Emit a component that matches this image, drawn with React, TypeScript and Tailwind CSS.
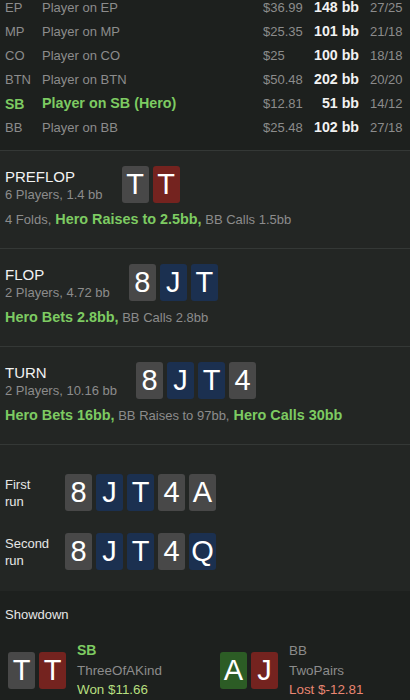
// ─── Data ─────────────────────────────────────────────────────────────────────

type Suit = "s" | "h" | "d" | "c";

const SUIT_BG: Record<Suit, string> = {
  s: "bg-[#484848]",
  h: "bg-[#74231f]",
  d: "bg-[#1b3050]",
  c: "bg-[#2c5c25]",
};

const PLAYERS = [
  { pos: "EP", name: "Player on EP", money: "$36.99", bb: "148 bb", count: "27/25" },
  { pos: "MP", name: "Player on MP", money: "$25.35", bb: "101 bb", count: "21/18" },
  { pos: "CO", name: "Player on CO", money: "$25", bb: "100 bb", count: "18/18" },
  { pos: "BTN", name: "Player on BTN", money: "$50.48", bb: "202 bb", count: "20/20" },
  { pos: "SB", name: "Player on SB (Hero)", money: "$12.81", bb: "51 bb", count: "14/12", hero: true },
  { pos: "BB", name: "Player on BB", money: "$25.48", bb: "102 bb", count: "27/18" },
];

type Action = { text: string; hero?: boolean };

const STREETS: {
  name: string;
  info: string;
  cards: [string, Suit][];
  actions: Action[];
}[] = [
  {
    name: "PREFLOP",
    info: "6 Players, 1.4 bb",
    cards: [
      ["T", "s"],
      ["T", "h"],
    ],
    actions: [
      { text: "4 Folds," },
      { text: "Hero Raises to 2.5bb,", hero: true },
      { text: "BB Calls 1.5bb" },
    ],
  },
  {
    name: "FLOP",
    info: "2 Players, 4.72 bb",
    cards: [
      ["8", "s"],
      ["J", "d"],
      ["T", "d"],
    ],
    actions: [
      { text: "Hero Bets 2.8bb,", hero: true },
      { text: "BB Calls 2.8bb" },
    ],
  },
  {
    name: "TURN",
    info: "2 Players, 10.16 bb",
    cards: [
      ["8", "s"],
      ["J", "d"],
      ["T", "d"],
      ["4", "s"],
    ],
    actions: [
      { text: "Hero Bets 16bb,", hero: true },
      { text: "BB Raises to 97bb," },
      { text: "Hero Calls 30bb", hero: true },
    ],
  },
];

const RUNS: { label: [string, string]; cards: [string, Suit][] }[] = [
  {
    label: ["First", "run"],
    cards: [
      ["8", "s"],
      ["J", "d"],
      ["T", "d"],
      ["4", "s"],
      ["A", "s"],
    ],
  },
  {
    label: ["Second", "run"],
    cards: [
      ["8", "s"],
      ["J", "d"],
      ["T", "d"],
      ["4", "s"],
      ["Q", "d"],
    ],
  },
];

// ─── Card ─────────────────────────────────────────────────────────────────────

function Card({ rank, suit }: { rank: string; suit: Suit }) {
  return (
    <div
      className={[
        "flex h-[37px] w-[27px] items-center justify-center rounded-[3px] text-[29px] leading-none text-white",
        SUIT_BG[suit],
      ].join(" ")}
    >
      {rank}
    </div>
  );
}

function CardRow({ cards }: { cards: [string, Suit][] }) {
  return (
    <div className="flex gap-[4px]">
      {cards.map(([r, s], i) => (
        <Card key={i} rank={r} suit={s} />
      ))}
    </div>
  );
}

// ─── App ──────────────────────────────────────────────────────────────────────

export default function App() {
  return (
    <div
      className="h-[700px] w-[410px] overflow-hidden bg-[#232624] text-[13px] text-[#8c8c8c]"
      style={{ fontFamily: '"Liberation Sans", Arial, sans-serif' }}
    >
      {/* Players table */}
      <div className="-mt-[4px] border-b border-[#343836] bg-[#1d201e] pb-[10px]">
        {PLAYERS.map((p) => (
          <div key={p.pos} className="flex h-[24px] items-center">
            <span
              className={[
                "w-[37px] pl-[5px]",
                p.hero ? "text-[14px] font-bold text-[#7dcb62]" : "",
              ].join(" ")}
            >
              {p.pos}
            </span>
            <span
              className={[
                "w-[226px] pl-[5px]",
                p.hero ? "text-[14.3px] font-bold text-[#7dcb62]" : "",
              ].join(" ")}
            >
              {p.name}
            </span>
            <span className="w-[46px]">{p.money}</span>
            <span className="w-[50px] text-right text-[14.2px] font-bold text-[#f2f2f2]">
              {p.bb}
            </span>
            <span className="pl-[11px]">{p.count}</span>
          </div>
        ))}
      </div>

      {/* Streets */}
      {STREETS.map((s) => (
        <div key={s.name} className="h-[98px] border-b border-[#343836] px-[5px] pt-[15px]">
          <div className="flex items-center gap-[19px]">
            <div className="flex h-[37px] flex-col justify-center">
              <div className="text-[15px] leading-[19px] text-[#f2f2f2]">{s.name}</div>
              <div className="leading-[17px]">{s.info}</div>
            </div>
            <CardRow cards={s.cards} />
          </div>
          <div className="mt-[8px] leading-[17px]">
            {s.actions.map((a, i) => (
              <span
                key={i}
                className={a.hero ? "text-[14.4px] font-bold text-[#7dcb62]" : ""}
              >
                {i > 0 ? " " : ""}
                {a.text}
              </span>
            ))}
          </div>
        </div>
      ))}

      {/* Runs */}
      <div className="flex flex-col gap-[22px] px-[5px] pt-[29px] pb-[21px]">
        {RUNS.map((r) => (
          <div key={r.label[0]} className="flex items-center">
            <div className="w-[60px] leading-[17px] text-[#e6e6e6]">
              {r.label[0]}
              <br />
              {r.label[1]}
            </div>
            <CardRow cards={r.cards} />
          </div>
        ))}
      </div>

      {/* Showdown */}
      <div className="h-[200px] bg-[#1d201e] pt-[15px]">
        <div className="px-[5px] leading-[17px] text-[#e6e6e6]">Showdown</div>
        <div className="mt-[18px] flex items-center">
          <div className="flex w-[220px] items-center gap-[11px] pl-[8px]">
            <CardRow
              cards={[
                ["T", "s"],
                ["T", "h"],
              ]}
            />
            <div className="text-[13.4px] leading-[19.5px]">
              <div className="text-[14px] font-bold text-[#7dcb62]">SB</div>
              <div>ThreeOfAKind</div>
              <div className="text-[#b6df7e]">Won $11.66</div>
            </div>
          </div>
          <div className="flex items-center gap-[11px]">
            <CardRow
              cards={[
                ["A", "c"],
                ["J", "h"],
              ]}
            />
            <div className="text-[13.4px] leading-[19.5px]">
              <div>BB</div>
              <div>TwoPairs</div>
              <div className="text-[#ea8672]">Lost $-12.81</div>
            </div>
          </div>
        </div>
      </div>
    </div>
  );
}
